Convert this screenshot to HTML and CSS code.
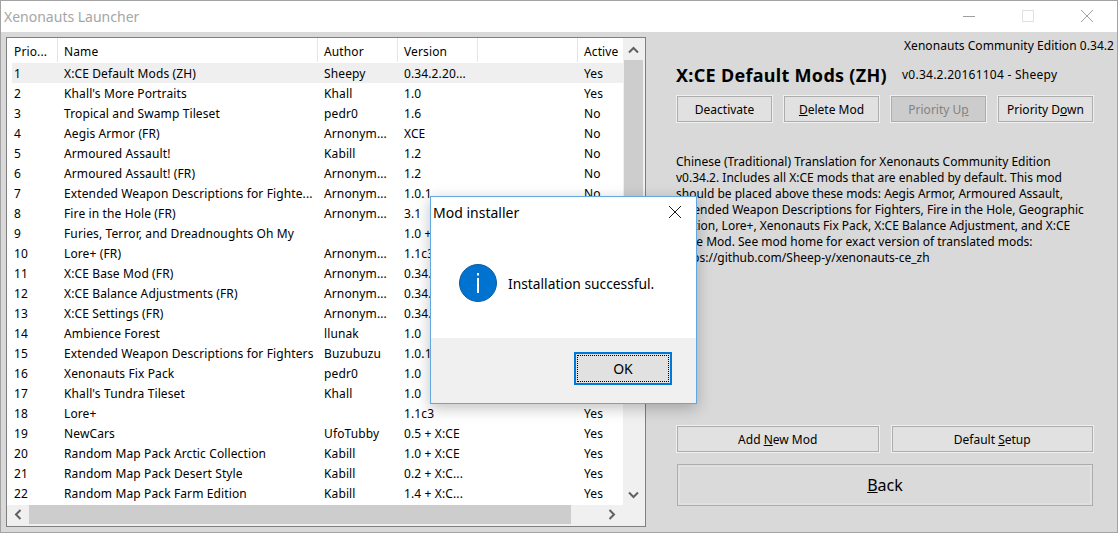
FILE: index.html
```html
<!DOCTYPE html>
<html lang="en">
    <head>
        <meta charset="utf-8">
        <title>Xenonauts Launcher</title>
        <link rel="stylesheet" href="styles.css">
    </head>
    <body>
        <div class="window">
            <header class="titlebar">
                <span class="title">Xenonauts Launcher</span>
                <div class="controls">
                    <svg width="14" height="14" viewBox="0 0 14 14"><path d="M1 7.5h12" stroke="#a0a0a0" fill="none"/></svg>
                    <svg width="14" height="14" viewBox="0 0 14 14"><rect x="1.500" y="1.500" width="11" height="11" stroke="#e0e0e0" fill="none"/></svg>
                    <svg width="14" height="14" viewBox="0 0 14 14"><path d="M1 1l12 12M13 1L1 13" stroke="#a0a0a0" fill="none"/></svg>
                </div>
            </header>
            <div class="content">
                <section class="listbox">
                    <div class="listbody">
                        <div class="table">
                            <div class="row head">
                                <span class="c1">Prio...</span><span class="c2">Name</span><span class="c3">Author</span><span class="c4">Version</span><span class="c5"></span><span class="c6">Active</span>
                            </div>
                            <div class="row selected"><span class="c1">1</span><span class="c2">X:CE Default Mods (ZH)</span><span class="c3">Sheepy</span><span class="c4">0.34.2.20...</span><span class="c5"></span><span class="c6">Yes</span></div>
                            <div class="row"><span class="c1">2</span><span class="c2">Khall's More Portraits</span><span class="c3">Khall</span><span class="c4">1.0</span><span class="c5"></span><span class="c6">Yes</span></div>
                            <div class="row"><span class="c1">3</span><span class="c2">Tropical and Swamp Tileset</span><span class="c3">pedr0</span><span class="c4">1.6</span><span class="c5"></span><span class="c6">No</span></div>
                            <div class="row"><span class="c1">4</span><span class="c2">Aegis Armor (FR)</span><span class="c3">Arnonym...</span><span class="c4">XCE</span><span class="c5"></span><span class="c6">No</span></div>
                            <div class="row"><span class="c1">5</span><span class="c2">Armoured Assault!</span><span class="c3">Kabill</span><span class="c4">1.2</span><span class="c5"></span><span class="c6">No</span></div>
                            <div class="row"><span class="c1">6</span><span class="c2">Armoured Assault! (FR)</span><span class="c3">Arnonym...</span><span class="c4">1.2</span><span class="c5"></span><span class="c6">No</span></div>
                            <div class="row"><span class="c1">7</span><span class="c2">Extended Weapon Descriptions for Fighte...</span><span class="c3">Arnonym...</span><span class="c4">1.0.1</span><span class="c5"></span><span class="c6">No</span></div>
                            <div class="row"><span class="c1">8</span><span class="c2">Fire in the Hole (FR)</span><span class="c3">Arnonym...</span><span class="c4">3.1</span><span class="c5"></span><span class="c6">No</span></div>
                            <div class="row"><span class="c1">9</span><span class="c2">Furies, Terror, and Dreadnoughts Oh My</span><span class="c3"></span><span class="c4">1.0 + X:CE</span><span class="c5"></span><span class="c6">No</span></div>
                            <div class="row"><span class="c1">10</span><span class="c2">Lore+ (FR)</span><span class="c3">Arnonym...</span><span class="c4">1.1c3</span><span class="c5"></span><span class="c6">No</span></div>
                            <div class="row"><span class="c1">11</span><span class="c2">X:CE Base Mod (FR)</span><span class="c3">Arnonym...</span><span class="c4">0.34.2</span><span class="c5"></span><span class="c6">No</span></div>
                            <div class="row"><span class="c1">12</span><span class="c2">X:CE Balance Adjustments (FR)</span><span class="c3">Arnonym...</span><span class="c4">0.34.2</span><span class="c5"></span><span class="c6">No</span></div>
                            <div class="row"><span class="c1">13</span><span class="c2">X:CE Settings (FR)</span><span class="c3">Arnonym...</span><span class="c4">0.34.2</span><span class="c5"></span><span class="c6">No</span></div>
                            <div class="row"><span class="c1">14</span><span class="c2">Ambience Forest</span><span class="c3">llunak</span><span class="c4">1.0</span><span class="c5"></span><span class="c6">Yes</span></div>
                            <div class="row"><span class="c1">15</span><span class="c2">Extended Weapon Descriptions for Fighters</span><span class="c3">Buzubuzu</span><span class="c4">1.0.1</span><span class="c5"></span><span class="c6">Yes</span></div>
                            <div class="row"><span class="c1">16</span><span class="c2">Xenonauts Fix Pack</span><span class="c3">pedr0</span><span class="c4">1.0</span><span class="c5"></span><span class="c6">Yes</span></div>
                            <div class="row"><span class="c1">17</span><span class="c2">Khall's Tundra Tileset</span><span class="c3">Khall</span><span class="c4">1.0</span><span class="c5"></span><span class="c6">Yes</span></div>
                            <div class="row"><span class="c1">18</span><span class="c2">Lore+</span><span class="c3"></span><span class="c4">1.1c3</span><span class="c5"></span><span class="c6">Yes</span></div>
                            <div class="row"><span class="c1">19</span><span class="c2">NewCars</span><span class="c3">UfoTubby</span><span class="c4">0.5 + X:CE</span><span class="c5"></span><span class="c6">Yes</span></div>
                            <div class="row"><span class="c1">20</span><span class="c2">Random Map Pack Arctic Collection</span><span class="c3">Kabill</span><span class="c4">1.0 + X:CE</span><span class="c5"></span><span class="c6">Yes</span></div>
                            <div class="row"><span class="c1">21</span><span class="c2">Random Map Pack Desert Style</span><span class="c3">Kabill</span><span class="c4">0.2 + X:C...</span><span class="c5"></span><span class="c6">Yes</span></div>
                            <div class="row"><span class="c1">22</span><span class="c2">Random Map Pack Farm Edition</span><span class="c3">Kabill</span><span class="c4">1.4 + X:C...</span><span class="c5"></span><span class="c6">Yes</span></div>
                        </div>
                        <div class="vscroll">
                            <svg width="19" height="22" viewBox="0 0 19 22"><path d="M5 14.500l4.500-4.500 4.500 4.500" stroke="#606060" stroke-width="2" fill="none"/></svg>
                            <div class="vthumb"></div>
                            <svg class="vdown" width="19" height="20" viewBox="0 0 19 20"><path d="M5 7.500l4.500 4.500 4.500-4.500" stroke="#606060" stroke-width="2" fill="none"/></svg>
                        </div>
                    </div>
                    <div class="hscroll">
                        <svg width="22" height="19" viewBox="0 0 22 19"><path d="M13.500 5l-4.500 4.500 4.500 4.500" stroke="#606060" stroke-width="2" fill="none"/></svg>
                        <div class="hthumb"></div>
                        <svg class="hright" width="19" height="19" viewBox="0 0 19 19"><path d="M7.500 5l4.500 4.500-4.500 4.500" stroke="#606060" stroke-width="2" fill="none"/></svg>
                    </div>
                </section>
                <aside class="details">
                    <div class="edition">Xenonauts Community Edition 0.34.2</div>
                    <div class="modhead">
                        <h1>X:CE Default Mods (ZH)</h1>
                        <span class="modver">v0.34.2.20161104 - Sheepy</span>
                    </div>
                    <div class="btnrow four">
                        <button>Deactivate</button>
                        <button><u>D</u>elete Mod</button>
                        <button class="disabled">Priority U<u>p</u></button>
                        <button>Priority D<u>o</u>wn</button>
                    </div>
                    <p class="desc">Chinese (Traditional) Translation for Xenonauts Community Edition v0.34.2. Includes all X:CE mods that are enabled by default. This mod should be placed above these mods: Aegis Armor, Armoured Assault, Extended Weapon Descriptions for Fighters, Fire in the Hole, Geographic Edition, Lore+, Xenonauts Fix Pack, X:CE Balance Adjustment, and X:CE Base Mod. See mod home for exact version of translated mods: https://github.com/Sheep-y/xenonauts-ce_zh</p>
                    <div class="btnrow two">
                        <button>Add <u>N</u>ew Mod</button>
                        <button>Default <u>S</u>etup</button>
                    </div>
                    <button class="back"><u>B</u>ack</button>
                </aside>
            </div>
        </div>
        <div class="dialog">
            <div class="dlgtitle">
                <span>Mod installer</span>
                <svg width="14" height="14" viewBox="0 0 14 14"><path d="M1 1l12 12M13 1L1 13" stroke="#1a1a1a" fill="none"/></svg>
            </div>
            <div class="dlgbody">
                <svg width="38" height="38" viewBox="0 0 38 38"><circle cx="19" cy="19" r="18.500" fill="#0072cf" stroke="#0a5da3"/><path d="M18 9h2v2.500h-2zM18 14h2v15h-2z" fill="#fff"/></svg>
                <span>Installation successful.</span>
            </div>
            <div class="dlgfoot">
                <button class="ok"><span>OK</span></button>
            </div>
        </div>
    </body>
</html>
```

FILE: styles.css
```css
html {
    background-color: #d9d9d9;
    color: #000;
    font-family: "Noto Sans", sans-serif;
    font-size: 12px;
}

body {
    margin: 0;
    height: 533px;
    overflow: hidden;
    position: relative;
}

.window {
    box-sizing: border-box;
    height: 533px;
    border: 1px solid #a3a3a3;
    display: flex;
    flex-direction: column;
}

.titlebar {
    height: 31px;
    flex: none;
    background-color: #fff;
    display: flex;
    align-items: center;
    justify-content: space-between;
    padding: 0 0 2px 3px;
    box-sizing: border-box;
}

.title {
    color: #a6a6a6;
    font-size: 14px;
    margin-top: 2px;
}

.controls {
    display: flex;
    gap: 45px;
    padding-right: 23px;
}

.content {
    flex: 1;
    display: flex;
    padding: 5px 0 0 5px;
    min-height: 0;
}

.listbox {
    box-sizing: border-box;
    width: 640px;
    height: 490px;
    flex: none;
    border: 1px solid #7f7f7f;
    background-color: #f0f0f0;
    display: flex;
    flex-direction: column;
    padding-bottom: 2px;
}

.listbody {
    flex: 1;
    display: flex;
    min-height: 0;
}

.table {
    width: 616px;
    flex: none;
    background-color: #fff;
    padding-left: 5px;
    box-sizing: border-box;
    overflow: hidden;
}

.row {
    display: flex;
    height: 20px;
    line-height: 22px;
    white-space: nowrap;
    letter-spacing: 0.12px;
}

.row span {
    padding-left: 6px;
    flex: none;
    box-sizing: border-box;
    overflow: hidden;
}

.row .c1 {
    padding-left: 2px;
}

.head {
    height: 25px;
    line-height: 27px;
}

.head span {
    border-right: 1px solid #e5e5e5;
    height: 24px;
}

.selected {
    background-color: #efefef;
}

.c1 { width: 46px; }
.c2 { width: 260px; }
.c3 { width: 80px; }
.c4 { width: 80px; }
.c5 { width: 100px; }
.c6 { width: 45px; }

.head .c6 {
    border-right: 0;
}

.vscroll {
    width: 19px;
    margin-left: 1px;
    flex: none;
    display: flex;
    flex-direction: column;
    background-color: #f0f0f0;
}

.vthumb {
    height: 250px;
    background-color: #cdcdcd;
}

.vdown {
    margin-top: auto;
}

.hscroll {
    height: 19px;
    flex: none;
    display: flex;
    align-items: center;
    background-color: #f0f0f0;
}

.hthumb {
    width: 542px;
    height: 19px;
    background-color: #cdcdcd;
}

.hright {
    margin-left: 31px;
}

.details {
    flex: 1;
    padding: 1px 24px 0 30px;
    display: flex;
    flex-direction: column;
}

.edition {
    text-align: right;
    margin-right: -21px;
    line-height: 16px;
    letter-spacing: 0.05px;
}

.modhead {
    display: flex;
    align-items: center;
    gap: 15px;
    margin-top: 9px;
    height: 24px;
    line-height: 24px;
}

.modhead h1 {
    font-size: 18px;
    font-weight: bold;
    margin: 0;
    letter-spacing: 0.3px;
    white-space: nowrap;
}

.modver {
    letter-spacing: 0.25px;
    white-space: nowrap;
}

.btnrow {
    display: flex;
    margin-left: 1px;
}

.four {
    margin-top: 9px;
    justify-content: space-between;
}

.two {
    gap: 13px;
}

button {
    font: inherit;
    color: #000;
    background-color: #e1e1e1;
    border: 1px solid #adadad;
    outline: 1px solid #f0f0f0;
    padding: 0;
    height: 26px;
}

.four button {
    width: 95px;
}

.two button {
    flex: 1;
}

.disabled {
    background-color: #cccccc;
    color: #838383;
}

.desc {
    margin: 32px 0 0;
    line-height: 16px;
    flex: 1;
}

.back {
    width: 416px;
    height: 42px;
    margin: 12px 0 26px 1px;
    background-color: #dadada;
    outline: none;
    box-shadow: inset 0 0 0 2px #e0e0e0;
    font-size: 16px;
}

.dialog {
    position: absolute;
    left: 430px;
    top: 196px;
    width: 267px;
    height: 208px;
    box-sizing: border-box;
    border: 1px solid #62a8e0;
    background-color: #fff;
    display: flex;
    flex-direction: column;
    box-shadow: 0 4px 14px rgba(0, 0, 0, 0.25);
}

.dlgtitle {
    height: 30px;
    display: flex;
    align-items: center;
    justify-content: space-between;
    padding: 0 14px 0 2px;
    font-size: 14px;
}

.dlgbody {
    flex: 1;
    display: flex;
    align-items: center;
    gap: 11px;
    padding-left: 28px;
    font-size: 13.8px;
}

.dlgbody span {
    padding-top: 2px;
}

.dlgfoot {
    height: 65px;
    box-sizing: border-box;
    background-color: #f0f0f0;
    display: flex;
    justify-content: flex-end;
    align-items: center;
    padding: 0 24px 4px 0;
}

.ok {
    width: 98px;
    height: 33px;
    border: 2px solid #0078d7;
    outline: none;
    font-size: 14px;
    padding: 1px;
}

.ok span {
    display: flex;
    height: 100%;
    align-items: center;
    justify-content: center;
    border: 1px dotted #000;
    box-sizing: border-box;
}
```
